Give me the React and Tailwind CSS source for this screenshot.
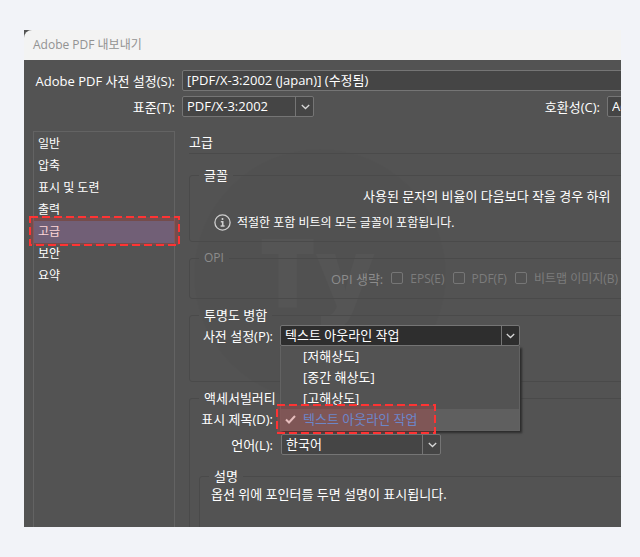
import React, { useState } from 'react';

const NAV_ITEMS = ['일반', '압축', '표시 및 도련', '출력', '고급', '보안', '요약'];

const PRESETS = ['[저해상도]', '[중간 해상도]', '[고해상도]', '텍스트 아웃라인 작업'];

const Chevron = () => (
  <svg className="w-[9px] h-[6px]" fill="none" stroke="#d8d8d8" strokeWidth="1.3" viewBox="0 0 9 6">
    <path d="M0.8 1L4.5 4.5L8.2 1" />
  </svg>
);

// Dashed red marker drawn over the part the reader should look at
const Highlight = ({ className }) => (
  <svg className={`absolute pointer-events-none overflow-visible ${className}`} aria-hidden="true">
    <rect width="100%" height="100%" fill="#ff3333" fillOpacity="0.2" stroke="#ff3333" strokeWidth="2" strokeDasharray="8 4" />
  </svg>
);

const Select = ({ id, value, className }) => (
  <div className={`relative h-[21px] ${className}`}>
    <select
      id={id}
      defaultValue={value}
      className="appearance-none block w-full h-full pl-1 pr-5 rounded-[2px] border border-[#757575] bg-[#454545] text-[13px] leading-[19px] text-white focus:outline-none"
    >
      <option>{value}</option>
    </select>
    <span className="absolute right-0 top-0 h-full w-[19px] border-l border-[#757575] flex items-center justify-center pointer-events-none">
      <Chevron />
    </span>
  </div>
);

const Group = ({ title, muted, className, children }) => (
  <fieldset className={`rounded-[3px] border border-[#4a4a4a] ${className}`}>
    <legend className={`ml-[9px] px-[5px] h-[18px] leading-[18px] ${muted ? 'text-xs/[18px] text-[#8c8c8c]' : 'text-white'}`}>{title}</legend>
    {children}
  </fieldset>
);

const CheckBox = ({ id, label }) => (
  <div className="flex items-center gap-[7px] shrink-0">
    <input id={id} type="checkbox" disabled className="appearance-none w-3 h-3 -mt-[3px] rounded-[2px] border border-[#767676]" />
    <label htmlFor={id} className="text-[#7c7c7c]">{label}</label>
  </div>
);

const Watermark = () => (
  <svg className="absolute left-[170px] top-[119px] w-[252px] h-[252px] pointer-events-none" viewBox="0 0 252 252" aria-hidden="true">
    <circle cx="126" cy="126" r="126" fill="#000" fillOpacity="0.015" />
    <text x="123" y="158" textAnchor="middle" fontFamily="Open Sans, sans-serif" fontWeight="800" fontSize="96" fill="#fff" fillOpacity="0.025">Ty</text>
  </svg>
);

const PresetSelect = () => {
  const [selected, setSelected] = useState(PRESETS[3]);

  return (
    <div className="relative w-[240px]">
      <button
        id="preset"
        type="button"
        aria-haspopup="listbox"
        aria-expanded="true"
        className="flex w-full h-[21px] rounded-[2px] border border-[#757575] bg-[#2e2e2e] text-left leading-[19px] text-white"
      >
        <span className="flex-1 pl-1">{selected}</span>
        <span className="w-[18px] h-full border-l border-[#757575] flex items-center justify-center">
          <Chevron />
        </span>
      </button>
      <ul role="listbox" className="absolute left-0 top-[21px] z-10 w-full border border-t-0 border-[#626262] bg-[#535353] shadow-[2px_2px_2px_#2c2c2c]">
        {PRESETS.map((name) => (
          <li
            key={name}
            role="option"
            aria-selected={name === selected}
            onClick={() => setSelected(name)}
            className={`flex items-center h-[21px] leading-[21px] ${name === selected ? 'bg-[#5f5f5f] text-[#489bed]' : 'text-white'}`}
          >
            <span className="w-[22px] pl-1">
              {name === selected && (
                <svg className="w-[11px] h-[9px]" fill="none" stroke="#e0e0e0" strokeWidth="2" viewBox="0 0 11 9">
                  <path d="M1 4.5L4 7.5L10 1" />
                </svg>
              )}
            </span>
            {name}
          </li>
        ))}
      </ul>
      <Highlight className="-left-[3px] top-[80px] w-[158px] h-[28px] z-20" />
    </div>
  );
};

const App = () => {
  const [tab, setTab] = useState('고급');

  return (
    <div className="min-h-screen bg-[#f2f3f8] pt-[30px] pl-6 pr-[19px] pb-[30px] font-['Open_Sans','Noto_Sans_CJK_KR',sans-serif] text-[13px] leading-[18px] text-white">
      <div className="relative overflow-hidden bg-[#535353]">
        <h1 className="h-[30px] rounded-tl-[8px] bg-[#f3f3f3] pl-[9px] text-xs/[30px] text-[#929292]">Adobe PDF 내보내기</h1>
        <Watermark />

        <div className="relative pt-[10px]">
          <div className="flex items-center">
            <label htmlFor="setting" className="w-[151px] shrink-0 text-right">Adobe PDF 사전 설정(S):</label>
            <Select id="setting" value="[PDF/X-3:2002 (Japan)] (수정됨)" className="ml-[7px] -mr-5 flex-1" />
          </div>
          <div className="flex items-center mt-[5px]">
            <label htmlFor="standard" className="w-[151px] shrink-0 text-right">표준(T):</label>
            <Select id="standard" value="PDF/X-3:2002" className="ml-[7px] w-[132px]" />
            <label htmlFor="compat" className="ml-auto mr-[7px]">호환성(C):</label>
            <Select id="compat" value="Acrobat 4" className="w-[100px] -mr-[86px] shrink-0" />
          </div>
        </div>

        <div className="relative flex mt-[14px] pl-[9px]">
          <nav className="relative w-[142px] shrink-0 pt-px border border-b-0 border-[#636363] text-xs">
            {NAV_ITEMS.map((item) => (
              <button
                key={item}
                type="button"
                onClick={() => setTab(item)}
                className={`block w-full h-[22px] pl-1 text-left leading-[22px] ${item === tab ? 'bg-[#4e6b88]' : ''}`}
              >
                {item}
              </button>
            ))}
            <Highlight className="-left-[4px] top-[85px] w-[149px] h-[28px]" />
          </nav>

          <main className="flex-1 min-w-0 ml-[14px] -mr-1">
            <h2 className="h-[23px] leading-[23px] border-b border-[#4a4a4a]">{tab}</h2>

            <Group title="글꼴" className="mt-[12px] h-[76px]">
              <p className="ml-[173px] mt-[2px] leading-5 whitespace-nowrap">사용된 문자의 비율이 다음보다 작을 경우 하위</p>
              <div className="flex items-center gap-[6px] mt-2 pl-6">
                <svg className="w-[17px] h-[17px]" viewBox="0 0 17 17" fill="none" stroke="#cfcfcf">
                  <circle cx="8.5" cy="8.5" r="7.6" strokeWidth="1.3" />
                  <path d="M8.5 4V6M6.8 7.8H8.7V12M6.6 12H10.6" strokeWidth="1.6" />
                </svg>
                <p className="text-xs">적절한 포함 비트의 모든 글꼴이 포함됩니다.</p>
              </div>
            </Group>

            <Group title="OPI" muted className="mt-[7px] h-[50px]">
              <div className="flex items-center gap-2 pl-[141px] mt-[3px] text-xs/[18px] whitespace-nowrap">
                <span className="text-[13px] text-[#8c8c8c]">OPI 생략:</span>
                <CheckBox id="eps" label="EPS(E)" />
                <CheckBox id="pdf" label="PDF(F)" />
                <CheckBox id="bitmap" label="비트맵 이미지(B)" />
              </div>
            </Group>

            <Group title="투명도 병합" className="mt-[7px] h-[76px]">
              <div className="flex items-center mt-px">
                <label htmlFor="preset" className="w-[83px] mr-[7px] text-right">사전 설정(P):</label>
                <PresetSelect />
              </div>
            </Group>

            <Group title="액세서빌러티" className="mt-[7px] -mb-1 border-b-0">
              <div className="flex items-center h-[24px]">
                <span className="w-[83px] text-right">표시 제목(D):</span>
              </div>
              <div className="flex items-center mt-[3px]">
                <label htmlFor="lang" className="w-[83px] mr-2 text-right">언어(L):</label>
                <Select id="lang" value="한국어" className="w-[160px]" />
              </div>
              <Group title="설명" className="ml-[9px] mt-[12px] h-[64px]">
                <p className="ml-[11px]">옵션 위에 포인터를 두면 설명이 표시됩니다.</p>
              </Group>
            </Group>
          </main>
        </div>
      </div>
    </div>
  );
};

export default App;
